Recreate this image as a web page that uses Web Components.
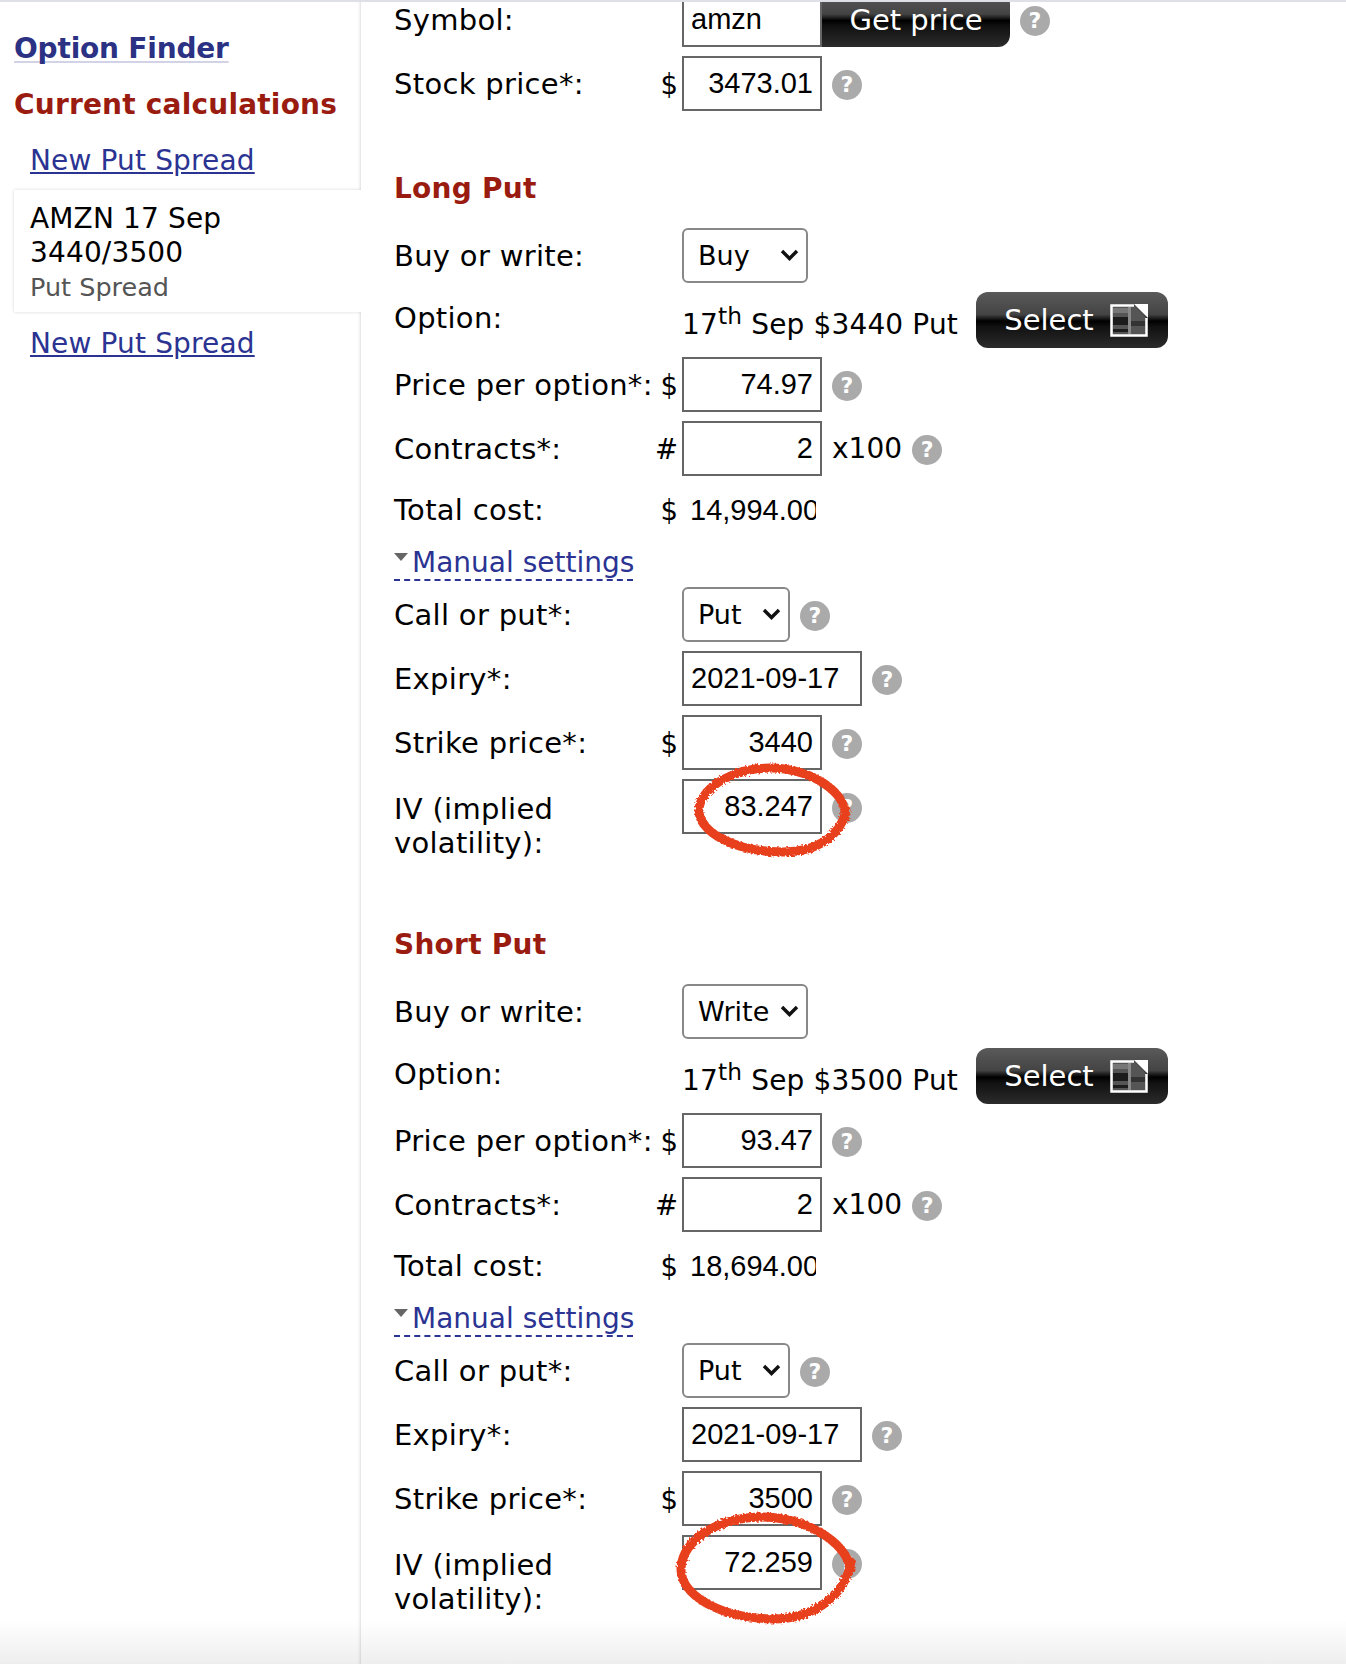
<!DOCTYPE html>
<html>
<head>
<meta charset="utf-8">
<title>Option Finder</title>
<style>
  html, body { margin: 0; height: 100%; }
  body {
    height: 1664px;
    overflow: hidden;
    font-family: "DejaVu Sans", Verdana, sans-serif;
    font-size: 28px;
    line-height: 34px;
    color: #000;
    background: #fff;
  }
  sup { font-size: 24px; line-height: 0; vertical-align: 8px; }
</style>
</head>
<body>
<ui-app>
  <ui-sidebar slot="side">
    <ui-brand>Option Finder</ui-brand>
    <ui-side-title>Current calculations</ui-side-title>
    <ui-nav-link>New Put Spread</ui-nav-link>
    <ui-calc-card name="Put Spread">AMZN 17 Sep 3440/3500</ui-calc-card>
    <ui-nav-link style="margin-top:15px">New Put Spread</ui-nav-link>
  </ui-sidebar>

  <ui-row style="margin-top:-10px">
    <span slot="label">Symbol:</span>
    <ui-field width="140" align="left" flat>amzn</ui-field><ui-button flat>Get price</ui-button><ui-help></ui-help>
  </ui-row>
  <ui-row prefix="$">
    <span slot="label">Stock price*:</span>
    <ui-field>3473.01</ui-field><ui-help></ui-help>
  </ui-row>

  <ui-section-title>Long Put</ui-section-title>
  <ui-leg action="Buy" date="17" strike="3440" price="74.97" total="14,994.00" exp-strike="3440" iv="83.247" ring="a"></ui-leg>

  <ui-section-title style="margin-top:68px">Short Put</ui-section-title>
  <ui-leg action="Write" date="17" strike="3500" price="93.47" total="18,694.00" exp-strike="3500" iv="72.259" ring="b"></ui-leg>
</ui-app>

<script>
// small helper, every element below is just a shadow root with its own style
function shadow(el, html) {
  el.attachShadow({ mode: 'open' }).innerHTML = html;
}

class UiApp extends HTMLElement {
  constructor() {
    super();
    shadow(this, `
      <style>
        :host { display: block; height: 1664px; overflow: hidden;
          background: linear-gradient(#fff 1620px, #eee 1664px); }
        .top { height: 2px; background: #dfdfe8; position: relative; z-index: 2; }
        .wrap { display: flex; height: 1662px; overflow: hidden; }
        .side { flex: 0 0 361px; }
        .main { flex: 1; min-width: 0; padding-left: 33px; }
      </style>
      <div class="top"></div>
      <div class="wrap">
        <div class="side"><slot name="side"></slot></div>
        <div class="main"><slot></slot></div>
      </div>`);
  }
}

class UiSidebar extends HTMLElement {
  constructor() {
    super();
    shadow(this, `
      <style>
        :host { display: block; height: 100%; padding-top: 30px; box-sizing: border-box;
          box-shadow: inset -3px 0 3px -2px rgba(0,0,0,.14); }
      </style>
      <slot></slot>`);
  }
}

class UiBrand extends HTMLElement {
  constructor() {
    super();
    shadow(this, `
      <style>
        :host { display: block; padding-left: 14px; font-weight: bold; color: #2b3183; font-size: 28px; letter-spacing: -.2px; }
        span { text-decoration: underline 2px #d2d3e6; text-underline-offset: 3px; text-decoration-skip-ink: none; }
      </style>
      <span><slot></slot></span>`);
  }
}

class UiSideTitle extends HTMLElement {
  constructor() {
    super();
    shadow(this, `
      <style>
        :host { display: block; padding-left: 14px; margin-top: 22px; font-weight: bold; color: #9a1c10; font-size: 28px; letter-spacing: .2px; }
      </style>
      <slot></slot>`);
  }
}

class UiNavLink extends HTMLElement {
  constructor() {
    super();
    shadow(this, `
      <style>
        :host { display: block; padding-left: 30px; margin-top: 22px; color: #2b3393; text-decoration: underline; letter-spacing: .15px; }
      </style>
      <slot></slot>`);
  }
}

class UiCalcCard extends HTMLElement {
  constructor() {
    super();
    shadow(this, `
      <style>
        :host { display: block; margin: 12px 0 0 14px; padding: 12px 40px 8px 16px; background: #fff; letter-spacing: .15px;
          box-shadow: 0 0 3px rgba(0,0,0,.16); clip-path: inset(-6px 0 -6px -6px); }
        .name { color: #555; font-size: 25.5px; line-height: 34px; letter-spacing: 0; }
      </style>
      <div><slot></slot></div>
      <div class="name">${this.getAttribute('name') || ''}</div>`);
  }
}

class UiSectionTitle extends HTMLElement {
  constructor() {
    super();
    shadow(this, `
      <style>
        :host { display: block; margin-top: 61px; margin-bottom: 22px; font-weight: bold; color: #9a1c10; font-size: 28px; letter-spacing: .25px; }
      </style>
      <slot></slot>`);
  }
}

class UiRow extends HTMLElement {
  constructor() {
    super();
    shadow(this, `
      <style>
        :host { display: flex; min-height: 55px; margin-bottom: 9px; position: relative; }
        .label { flex: 0 0 260px; padding-top: var(--label-top, 11px); box-sizing: border-box;
          font-size: 29px; letter-spacing: .3px; }
        .prefix { flex: 0 0 24px; padding-top: var(--prefix-top, 11px); text-align: right; box-sizing: border-box; font-size: 27.500px; }
        .ctl { display: flex; align-items: center; align-self: flex-start; min-height: var(--ctl-height, 55px); margin-left: 4px; gap: 10px; }
        ::slotted(ui-field[flat]) { margin-right: -10px; }
      </style>
      <div class="label"><slot name="label"></slot></div>
      <div class="prefix">${this.getAttribute('prefix') || ''}</div>
      <div class="ctl"><slot></slot></div>`);
  }
}

class UiField extends HTMLElement {
  constructor() {
    super();
    const w = this.getAttribute('width') || 140;
    const align = this.getAttribute('align') || 'right';
    const bare = this.hasAttribute('bare');
    shadow(this, `
      <style>
        :host { display: block; }
        .box { width: ${w}px; height: ${bare ? 50 : 55}px; box-sizing: border-box; background: ${bare ? 'none' : '#fff'};
          border: ${bare ? 0 : '2px solid #666'};
          padding: 0 ${bare ? 0 : 7}px 0 ${bare ? 8 : 7}px; text-align: ${align}; line-height: ${bare ? 50 : 51}px; white-space: nowrap; overflow: hidden;
          font-family: "Liberation Sans", Arial, sans-serif; font-size: 29px; }
      </style>
      <div class="box"><slot></slot></div>`);
  }
}

class UiSelect extends HTMLElement {
  constructor() {
    super();
    const w = this.getAttribute('width') || 126;
    shadow(this, `
      <style>
        :host { display: block; }
        .box { position: relative; width: ${w}px; height: 55px; box-sizing: border-box; border: 2px solid #888;
          border-radius: 6px; background: #fff; padding-left: 14px; line-height: 51px; font-size: 27px; }
        svg { position: absolute; right: 7px; top: 19px; }
      </style>
      <div class="box"><slot></slot>
        <svg width="19" height="12" viewBox="0 0 19 12"><path d="M2 2l7.5 7.5L17 2" fill="none" stroke="#111" stroke-width="3.4"/></svg>
      </div>`);
  }
}

class UiHelp extends HTMLElement {
  constructor() {
    super();
    shadow(this, `
      <style>
        :host { display: flex; align-items: center; justify-content: center; flex: none; width: 30px; height: 30px; margin-top: 3px;
          border-radius: 50%; background: #aaa; color: #fff; font-weight: bold; font-size: 22px; line-height: 30px; }
      </style>
      ?`);
  }
}

class UiButton extends HTMLElement {
  constructor() {
    super();
    const flat = this.hasAttribute('flat');
    shadow(this, `
      <style>
        :host { display: block; }
        .btn { display: flex; align-items: center; justify-content: center; gap: 16px; box-sizing: border-box;
          padding-left: ${flat ? 0 : 8}px;
          width: ${flat ? 188 : 192}px; height: ${flat ? 55 : 56}px; color: #fff; font-size: 29px;
          border-radius: ${flat ? '0 12px 12px 0' : '12px'};
          background: linear-gradient(#5a5a5a 0, #444 40%, #000 52%, #111 62%, #2c2c2c 100%); }
      </style>
      <div class="btn"><slot></slot></div>`);
  }
}

class UiManual extends HTMLElement {
  constructor() {
    super();
    shadow(this, `
      <style>
        :host { display: block; height: 36px; margin: 10px 0 6px; }
        .link { display: flex; align-items: flex-start; width: 239px; height: 36px; box-sizing: border-box; white-space: nowrap;
          border-bottom: 2px dashed #2b3393; color: #2b3393; font-size: 28px; line-height: 36px; }
        i { flex: none; width: 0; height: 0; margin: 8px 4px 0 0; border: 7px solid transparent; border-top: 8px solid #666; border-bottom: 0; }
      </style>
      <span class="link"><i></i><slot></slot></span>`);
  }
}

// the red pen rings someone drew over the screenshot
class UiRing extends HTMLElement {
  constructor() {
    super();
    const rings = {
      a: { w: 156, h: 92, d: 'M150 54C153 30 120 6 78 4C40 3 8 22 4 44C2 68 40 88 88 88C122 88 146 72 151 46' },
      b: { w: 180, h: 111, d: 'M174 58C168 28 126 4 82 5C40 6 6 28 4 56C3 84 44 106 96 107C136 107 168 84 174 50' },
    };
    const r = rings[this.getAttribute('kind')] || rings.a;
    shadow(this, `
      <style>
        :host { position: absolute; display: block; pointer-events: none; }
        svg { display: block; overflow: visible; }
      </style>
      <svg width="${r.w}" height="${r.h}" viewBox="0 0 ${r.w} ${r.h}">
        <filter id="rough" x="-10%" y="-10%" width="120%" height="120%">
          <feTurbulence type="fractalNoise" baseFrequency="0.5" numOctaves="2" seed="4"/>
          <feDisplacementMap in="SourceGraphic" scale="5"/>
        </filter>
        <path d="${r.d}" fill="none" stroke="#e8401f" stroke-width="9" stroke-linecap="round" filter="url(#rough)"/>
      </svg>`);
  }
}

class UiSheetIcon extends HTMLElement {
  constructor() {
    super();
    shadow(this, `
      <style>:host { display: block; } svg { display: block; }</style>
      <svg width="38" height="33" viewBox="0 0 38 33">
        <path d="M1.500 1.500H24L36.500 14V31.500H1.500Z" fill="#555"/>
        <rect x="3" y="4" width="15" height="5" fill="#777"/>
        <rect x="3" y="13" width="15" height="8" fill="#1c1c1c"/>
        <rect x="3" y="25" width="15" height="3" fill="#1c1c1c"/>
        <rect x="20" y="17" width="15" height="5" fill="#333"/>
        <rect x="18" y="3" width="3" height="27" fill="#8a8a8a"/>
        <path d="M24 1.500H1.500V31.500H36.500V14" fill="none" stroke="#fff" stroke-width="2.500"/>
        <path d="M24 0H38V14Z" fill="#fff"/>
      </svg>`);
  }
}

// one option leg of the spread, both are laid out the same
class UiLeg extends HTMLElement {
  constructor() {
    super();
    const a = (n) => this.getAttribute(n);
    const ringPos = a('ring') === 'a' ? 'left:13px;top:-15px' : 'left:-5px;top:-23px';
    shadow(this, `
      <style>
        :host { display: block; }
        .opt { display: block; width: 276px; padding-top: 1px; margin-right: 8px; letter-spacing: .15px; white-space: nowrap; }
      </style>
      <ui-row>
        <span slot="label">Buy or write:</span>
        <ui-select>${a('action')}</ui-select>
      </ui-row>
      <ui-row style="--label-top:9px">
        <span slot="label">Option:</span>
        <span class="opt">${a('date')}<sup>th</sup> Sep $${a('strike')} Put</span>
        <ui-button><span>Select</span><ui-sheet-icon></ui-sheet-icon></ui-button>
      </ui-row>
      <ui-row prefix="$">
        <span slot="label">Price per option*:</span>
        <ui-field>${a('price')}</ui-field><ui-help></ui-help>
      </ui-row>
      <ui-row prefix="#">
        <span slot="label">Contracts*:</span>
        <ui-field>${a('contracts') || 2}</ui-field><span>x100</span><ui-help></ui-help>
      </ui-row>
      <ui-row prefix="$" style="min-height:50px;margin:0;--label-top:8px;--prefix-top:8px;--ctl-height:50px">
        <span slot="label">Total cost:</span>
        <ui-field bare width="134" align="left">${a('total')}</ui-field>
      </ui-row>
      <ui-manual>Manual settings</ui-manual>
      <ui-row>
        <span slot="label">Call or put*:</span>
        <ui-select width="108">Put</ui-select><ui-help></ui-help>
      </ui-row>
      <ui-row>
        <span slot="label">Expiry*:</span>
        <ui-field width="180" align="left">2021-09-17</ui-field><ui-help></ui-help>
      </ui-row>
      <ui-row prefix="$">
        <span slot="label">Strike price*:</span>
        <ui-field>${a('exp-strike')}</ui-field><ui-help></ui-help>
      </ui-row>
      <ui-row style="--label-top:13px">
        <span slot="label">IV (implied<br>volatility):</span>
        <span style="position:relative;display:flex;align-items:center;gap:10px">
          <ui-field>${a('iv')}</ui-field><ui-help></ui-help>
          <ui-ring kind="${a('ring')}" style="${ringPos}"></ui-ring>
        </span>
      </ui-row>`);
  }
}

customElements.define('ui-app', UiApp);
customElements.define('ui-sidebar', UiSidebar);
customElements.define('ui-brand', UiBrand);
customElements.define('ui-side-title', UiSideTitle);
customElements.define('ui-nav-link', UiNavLink);
customElements.define('ui-calc-card', UiCalcCard);
customElements.define('ui-section-title', UiSectionTitle);
customElements.define('ui-row', UiRow);
customElements.define('ui-field', UiField);
customElements.define('ui-select', UiSelect);
customElements.define('ui-help', UiHelp);
customElements.define('ui-button', UiButton);
customElements.define('ui-manual', UiManual);
customElements.define('ui-ring', UiRing);
customElements.define('ui-sheet-icon', UiSheetIcon);
customElements.define('ui-leg', UiLeg);
</script>
</body>
</html>
